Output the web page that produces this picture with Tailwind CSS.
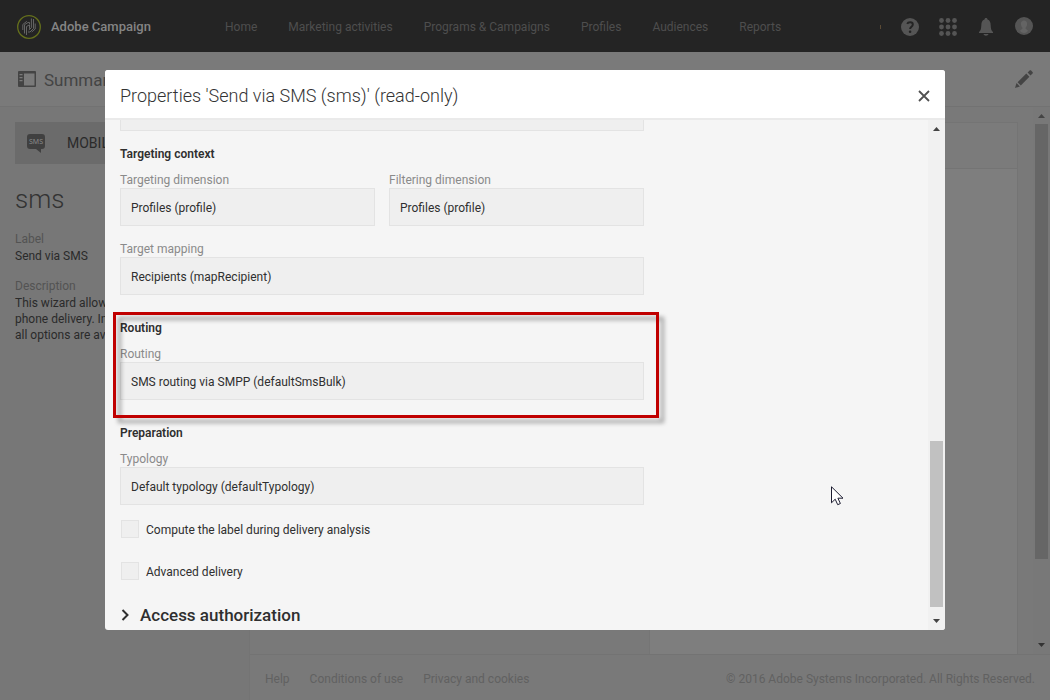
<!DOCTYPE html>
<html lang="en">
<head>
<meta charset="utf-8">
<title>Adobe Campaign</title>
<script src="https://cdn.jsdelivr.net/npm/@tailwindcss/browser@4"></script>
</head>
<body class="h-screen overflow-hidden bg-[#797979] font-[Roboto,sans-serif] text-xs text-[#2f2f2f]">
<div class="flex h-full flex-col">
  <header class="flex h-[52px] shrink-0 items-center bg-[#242424] pt-px pr-[17px] pl-4 text-[#4e4e4e]">
    <a href="#" class="flex w-[209px] items-center gap-[9px] text-[13px] font-medium text-[#858585]">
      <svg class="size-[26px]" viewBox="0 0 26 26" fill="none">
        <circle cx="13" cy="13" r="11.3" stroke="#65701c" stroke-width="1.3"/>
        <g stroke="#6c6c6c" stroke-width=".9"><path d="M10.500 21v-8.500l3-1.700v4"/><path d="M8.500 19.500v-8.800L12 8.500h1.500v1.500"/><path d="M6.800 16v-5.500l4-3.200"/><path d="M15.400 4.500v9.200L12.800 16"/><path d="M17.500 5v9.500L14 18h-2"/><path d="M19.200 9.500V15l-3.500 3"/></g>
      </svg>
      Adobe Campaign
    </a>
    <nav class="flex gap-[31px]">
      <a href="#">Home</a><a href="#">Marketing activities</a><a href="#">Programs &amp; Campaigns</a><a href="#">Profiles</a><a href="#">Audiences</a><a href="#">Reports</a>
    </nav>
    <div class="ml-auto flex items-center gap-5">
      <span class="h-1 w-px bg-[#5b4a34]"></span>
      <button aria-label="Help"><svg class="size-[18px]" viewBox="0 0 18 18"><circle cx="9" cy="9" r="9" fill="#555"/><path d="M6.2 5.8C7 4 11.8 3.5 11.8 6.500c0 2.200-2.700 2.200-2.700 4.500" fill="none" stroke="#242424" stroke-width="2"/><circle cx="9.100" cy="13.700" r="1.300" fill="#242424"/></svg></button>
      <button aria-label="Solutions"><svg class="size-[18px]" viewBox="0 0 18 18" fill="#555"><circle cx="2.500" cy="2.500" r="2.400"/><circle cx="9" cy="2.500" r="2.400"/><circle cx="15.500" cy="2.500" r="2.400"/><circle cx="2.500" cy="9" r="2.400"/><circle cx="9" cy="9" r="2.400"/><circle cx="15.500" cy="9" r="2.400"/><circle cx="2.500" cy="15.500" r="2.400"/><circle cx="9" cy="15.500" r="2.400"/><circle cx="15.500" cy="15.500" r="2.400"/></svg></button>
      <button aria-label="Notifications"><svg class="size-[18px]" viewBox="0 0 18 18" fill="#555"><path d="M9 0c1 0 1.500.7 1.500 1.600C13 2.400 13.600 4.500 13.700 7.500c.1 3.500.8 5.500 2.300 6.500v1H2v-1c1.500-1 2.200-3 2.300-6.500.1-3 .7-5.100 3.200-5.900C7.500.7 8 0 9 0zM6.500 16h5c-.5 2.200-4.500 2.200-5 0z"/></svg></button>
      <button aria-label="Account" class="mb-0.5"><svg class="size-[18px]" viewBox="0 0 18 18"><circle cx="9" cy="9" r="9" fill="#555"/><path d="M9 3.500c2 0 3.100 1.400 3.100 3.200 0 1.900-.7 3-1.500 3.800v1.200l2.300 1.900C12.500 15.300 11 16 9 16s-3.500-.7-3.900-2.400l2.300-1.900v-1.200C6.600 9.700 5.900 8.600 5.900 6.700 5.900 4.900 7 3.500 9 3.500z" fill="#646464"/></svg></button>
    </div>
  </header>

  <div class="flex h-[55px] shrink-0 items-center justify-between border-b border-[#727272] bg-[#7a7a7a] pr-[17px] pl-[18px] text-[#444]">
    <h1 class="flex items-center gap-2 pt-0.5 text-[17px]">
      <svg class="mb-0.5 h-4 w-[18px]" viewBox="0 0 18 16" fill="#444"><path fill-rule="evenodd" d="M1 0h16a1 1 0 0 1 1 1v14a1 1 0 0 1-1 1H1a1 1 0 0 1-1-1V1a1 1 0 0 1 1-1zM6 2.500v12h10.500v-12zM1.500 3v1.300h3V3zm0 3v1.300h3V6zm0 3v1.300h3V9z"/></svg>
      Summary
    </h1>
    <button aria-label="Edit"><svg class="size-[18px]" viewBox="0 0 18 18" fill="#444"><path d="M0 18l1.500-4.900 3.400 3.400zM2.600 12.200L11.300 3.600l3.100 3.100L5.800 15.400zM12.600 2.400L14.600.5c.5-.5 1-.5 1.500 0l1.400 1.400c.5.500.5 1 0 1.500l-2 2z"/></svg></button>
  </div>

  <div class="flex min-h-0 flex-1">
    <aside class="w-[250px] shrink-0 border-r border-[#747474] bg-[#777] px-[15px] pt-[15px] text-[#2a2a2a]">
      <div class="flex h-[42px] items-center gap-5 bg-[#6b6b6b] pl-3 text-sm">
        <svg class="h-[19px] w-5" viewBox="0 0 20 19"><path d="M3 0h12a3 3 0 0 1 3 3v9a3 3 0 0 1-3 3h-1v4l-5-4H3a3 3 0 0 1-3-3V3a3 3 0 0 1 3-3z" fill="#404040"/><text x="9" y="10" text-anchor="middle" font-family="Noto Sans" font-size="7" fill="#888">SMS</text></svg>
        MOBILE
      </div>
      <h2 class="mt-[17px] text-[26px] leading-9 font-light text-[#333]">sms</h2>
      <dl class="mt-[14px] leading-4 whitespace-nowrap">
        <dt class="text-[#535353]">Label</dt>
        <dd class="mt-px">Send via SMS</dd>
        <dt class="mt-[14px] text-[#535353]">Description</dt>
        <dd class="mt-px">This wizard allow<br>phone delivery. In<br>all options are av</dd>
      </dl>
    </aside>
    <div class="flex min-w-0 flex-1 flex-col">
      <main class="flex min-h-0 flex-1">
        <div class="min-w-0 flex-1 px-[15px] pt-[15px]">
          <div class="grid h-full grid-cols-[384px_1fr] border-t border-r border-[#747474]">
            <div></div>
            <div class="border-l border-[#757575] bg-[#7e7e7e]"><div class="h-[46px] border-b border-[#747474] bg-[#7b7b7b]"></div></div>
          </div>
        </div>
        <div class="flex w-[17px] shrink-0 flex-col items-center bg-[#787878]">
          <svg class="h-[17px] w-[17px]" viewBox="0 0 17 17" fill="#444"><path d="M5 11h7L8.500 7z"/></svg>
          <div class="h-[435px] w-[13px] bg-[#666]"></div>
          <svg class="mt-auto h-[17px] w-[17px]" viewBox="0 0 17 17" fill="#333"><path d="M5 6h7l-3.500 4z"/></svg>
        </div>
      </main>
      <footer class="flex h-[46px] shrink-0 items-center gap-5 border-t border-[#737373] px-[15px] pt-0.5 text-[#616161]">
        <a href="#">Help</a><a href="#">Conditions of use</a><a href="#">Privacy and cookies</a>
        <p class="ml-auto">© 2016 Adobe Systems Incorporated. All Rights Reserved.</p>
      </footer>
    </div>
  </div>
</div>

<div class="fixed inset-0 flex items-center justify-center">
  <section role="dialog" aria-labelledby="title" class="flex h-4/5 w-4/5 flex-col overflow-hidden rounded-[3px] bg-[#f5f5f5]">
    <div class="flex h-[50px] shrink-0 items-center justify-between border-b-2 border-[#eaeaea] bg-white px-[15px] pt-1">
      <h2 id="title" class="text-lg font-light text-[#333]">Properties 'Send via SMS (sms)' (read-only)</h2>
      <button aria-label="Close"><svg class="size-3" viewBox="0 0 12 12" stroke="#505050" stroke-width="1.800"><path d="M1 1l10 10M11 1l-10 10"/></svg></button>
    </div>
    <div class="flex min-h-0 flex-1">
      <form class="min-w-0 flex-1 overflow-hidden px-[15px]">
        <div class="w-[524px]">
          <div class="h-[11px] border border-t-0 border-[#e3e3e3] bg-[#efefef]"></div>
          <h3 class="mt-[13px] leading-5 font-semibold">Targeting context</h3>
          <div class="mt-2 grid grid-cols-2 gap-[14px] leading-4">
            <div><label for="td" class="block text-[#8a8a8a]">Targeting dimension</label><input id="td" readonly value="Profiles (profile)" class="block h-[38px] w-full border border-[#e3e3e3] bg-[#efefef] px-[10px] pt-0.5"></div>
            <div><label for="fd" class="block text-[#8a8a8a]">Filtering dimension</label><input id="fd" readonly value="Profiles (profile)" class="block h-[38px] w-full border border-[#e3e3e3] bg-[#efefef] px-[10px] pt-0.5"></div>
          </div>
          <div class="mt-[15px] leading-4"><label for="tm" class="block text-[#8a8a8a]">Target mapping</label><input id="tm" readonly value="Recipients (mapRecipient)" class="block h-[38px] w-full border border-[#e3e3e3] bg-[#efefef] px-[10px] pt-0.5"></div>
          <div class="relative mt-[23px]">
            <h3 class="leading-5 font-semibold">Routing</h3>
            <div class="mt-2 leading-4"><label for="ro" class="block text-[#8a8a8a]">Routing</label><input id="ro" readonly value="SMS routing via SMPP (defaultSmsBulk)" class="block h-[38px] w-full border border-[#e3e3e3] bg-[#efefef] px-[10px] pt-0.5"></div>
            <div class="pointer-events-none absolute -top-1.5 -right-[15px] -bottom-[18px] -left-[7px] border-3 border-[#c00000] drop-shadow-[5px_5px_2px_rgba(0,0,0,0.35)]"></div>
          </div>
          <h3 class="mt-[23px] leading-5 font-semibold">Preparation</h3>
          <div class="mt-2 leading-4"><label for="ty" class="block text-[#8a8a8a]">Typology</label><input id="ty" readonly value="Default typology (defaultTypology)" class="block h-[38px] w-full border border-[#e3e3e3] bg-[#efefef] px-[10px] pt-0.5"></div>
          <label class="mt-[14px] flex h-5 items-center gap-[7px] pl-px"><input type="checkbox" disabled class="size-[18px] appearance-none border border-[#e3e3e3] bg-[#efefef]"><span class="pt-0.5">Compute the label during delivery analysis</span></label>
          <label class="mt-[22px] flex h-5 items-center gap-[7px] pl-px"><input type="checkbox" disabled class="size-[18px] appearance-none border border-[#e3e3e3] bg-[#efefef]"><span class="pt-0.5">Advanced delivery</span></label>
          <button type="button" class="mt-[22px] flex h-6 items-center gap-[10px] text-[17px] leading-6 font-medium"><svg class="h-3 w-[10px]" viewBox="0 0 10 12" fill="none" stroke="#2f2f2f" stroke-width="2"><path d="M2.500 1l5 5-5 5"/></svg>Access authorization</button>
        </div>
      </form>
      <div class="flex w-[17px] shrink-0 flex-col items-center bg-[#f1f1f1]">
        <svg class="h-[17px] w-[17px]" viewBox="0 0 17 17" fill="#444"><path d="M5 11h7L8.500 7z"/></svg>
        <div class="mt-auto h-[166px] w-[13px] bg-[#c1c1c1]"></div>
        <svg class="mt-[6px] h-[17px] w-[17px]" viewBox="0 0 17 17" fill="#444"><path d="M5 6h7l-3.500 4z"/></svg>
      </div>
    </div>
  </section>
  <svg class="absolute top-[486px] left-[831px] h-5 w-[13px]" viewBox="0 0 13 20" fill="#fff" stroke="#1c1c30"><path d="M.5.800v16l3.700-3.600 2.500 5.500 2.700-1.200-2.500-5.300H12z"/></svg>
</div>
</body>
</html>
